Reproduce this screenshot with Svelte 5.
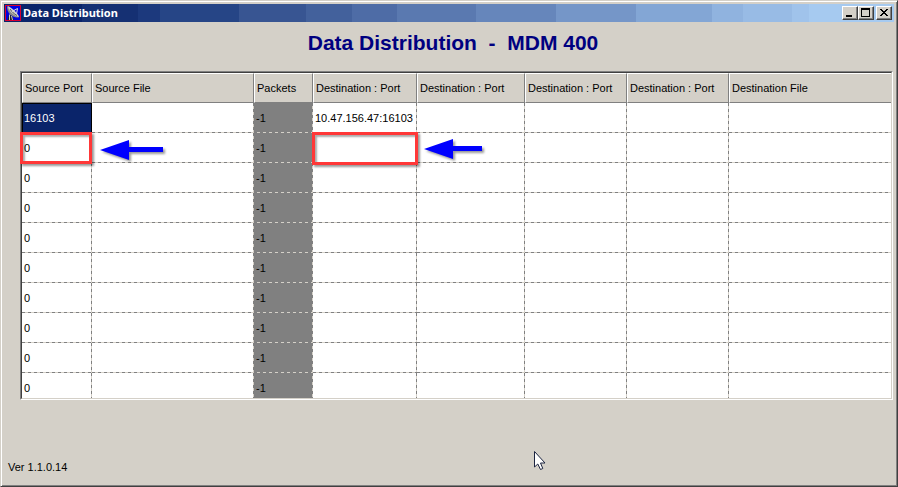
<script>
  const columns = [
    { label: 'Source Port', width: 70 },
    { label: 'Source File', width: 162 },
    { label: 'Packets', width: 59 },
    { label: 'Destination : Port', width: 104 },
    { label: 'Destination : Port', width: 108 },
    { label: 'Destination : Port', width: 102 },
    { label: 'Destination : Port', width: 102 },
    { label: 'Destination File' }
  ];
  const rows = Array.from({ length: 10 }, (_, i) =>
    i === 0
      ? ['16103', '', '-1', '10.47.156.47:16103', '', '', '', '']
      : ['0', '', '-1', '', '', '', '', '']
  );
</script>

{#snippet arrow(length)}
  <svg class="arrow" width={length} height="20" viewBox="0 0 {length} 20" aria-hidden="true">
    <path d="M0 10 29 0V7H{length}V12H29V20Z" fill="#0000ff" />
  </svg>
{/snippet}

<div class="window">
  <header class="titlebar">
    <svg class="app-icon" width="16" height="16" viewBox="0 0 16 16" aria-hidden="true">
      <rect width="16" height="16" fill="#0000e0" />
      <path d="M4 9.5 2.5 15.5H9L7 11Z" fill="#222" />
      <path d="M4.5 9.5V15M6.5 11 7.5 15" fill="none" stroke="#c8c8c8" />
      <path d="M2 1.5C2 7.5 6.500 13 13.500 12.500L14 11.500 3.500 1Z" fill="#8a8a8a" />
      <path d="M3 1.500C7 2.500 12.500 8 14 11.800C9.500 11.500 3.500 6 3 1.500Z" fill="#d0d0d0" />
      <path d="M5 4C7 7 9 9 12 10.500" fill="none" stroke="#555" />
      <path d="M7 6.500 12.500 3.500M11.500 9 12.500 3.500" fill="none" stroke="#ddd" />
      <rect x=".5" y=".5" width="15" height="15" fill="none" stroke="#d80030" />
    </svg>
    <span class="caption">Data Distribution</span>
    <div class="controls">
      <button type="button" aria-label="Minimize">
        <svg width="12" height="10" viewBox="0 0 12 10" shape-rendering="crispEdges"><path d="M2 7H8V9H2Z" /></svg>
      </button>
      <button type="button" aria-label="Maximize">
        <svg width="12" height="10" viewBox="0 0 12 10" shape-rendering="crispEdges"><path fill-rule="evenodd" d="M1 0H10V9H1ZM2 2V8H9V2Z" /></svg>
      </button>
      <button type="button" class="close" aria-label="Close">
        <svg width="12" height="10" viewBox="0 0 12 10" shape-rendering="crispEdges"><path d="M2 1H4V2H5V3H7V2H8V1H10V2H9V3H8V4H7V5H8V6H9V7H10V8H8V7H7V6H5V7H4V8H2V7H3V6H4V5H5V4H4V3H3V2H2Z" /></svg>
      </button>
    </div>
  </header>

  <main>
    <h1>Data Distribution&nbsp; - &nbsp;MDM 400</h1>
    <div class="grid">
      <div class="well">
        <table>
          <colgroup>
            {#each columns as c}
              <col style:width={c.width ? `${c.width}px` : null} />
            {/each}
          </colgroup>
          <thead>
            <tr>
              {#each columns as c}
                <th scope="col">{c.label}</th>
              {/each}
            </tr>
          </thead>
          <tbody>
            {#each rows as row, r}
              <tr>
                {#each row as value, c}
                  <td class:selected={r === 0 && c === 0} class:packets={c === 2}>
                    {value}
                    {#if r === 1 && (c === 0 || c === 3)}
                      <div class="callout" class:wide={c === 3}>{@render arrow(c === 3 ? 58 : 63)}</div>
                    {/if}
                  </td>
                {/each}
              </tr>
            {/each}
          </tbody>
        </table>
      </div>
    </div>
    <footer>Ver 1.1.0.14</footer>
  </main>

  <svg class="cursor" width="14" height="21" viewBox="0 0 14 21" aria-hidden="true">
    <path d="M1.500 1.500V17L4.800 14 7.500 19.500 9.800 18.500 7.500 13H12Z" fill="#fff" stroke="#1c2440" />
  </svg>
</div>

<style>
  .window {
    box-sizing: border-box;
    position: relative;
    display: flex;
    flex-direction: column;
    min-height: 100vh;
    padding: 2px;
    background: #d4d0c8;
    border: 1px solid;
    border-color: #d4d0c8 #404040 #404040 #d4d0c8;
    box-shadow: inset 1px 1px #fff, inset -1px -1px #808080;
    color: #000;
    font: 11px/14px "Liberation Sans", Arial, sans-serif;
  }
  .titlebar {
    display: flex;
    align-items: center;
    height: 18px;
    margin: 1px 1px 0;
    padding: 0 2px 0 1px;
    background: linear-gradient(90deg,
      #0a246a 0 8.8%, #153073 8.8% 15.1%, #1c397d 15.1% 17.5%, #264586 17.5% 26.4%,
      #385592 26.4% 33.9%, #43619c 33.9% 39.1%, #4e6ca6 39.1% 44.2%, #5a79b0 44.2% 53%,
      #6686bb 53% 62%, #7596c8 62% 71%, #83a6d5 71% 79.5%, #90b3df 79.5% 83%,
      #98bbe5 83% 88.5%, #a0c3eb 88.5% 90.5%, #a6caf0 90.5%);
  }
  .app-icon { flex: none; }
  .caption {
    padding-left: 2px;
    color: #fff;
    font: bold 11px/16px "Noto Sans", Tahoma, sans-serif;
  }
  .controls { display: flex; margin-left: auto; }
  button {
    display: flex;
    align-items: center;
    justify-content: center;
    width: 16px;
    height: 14px;
    padding: 0;
    border: 1px solid;
    border-color: #fff #404040 #404040 #fff;
    background: #d4d0c8;
    box-shadow: inset -1px -1px #808080;
  }
  button svg { flex: none; }
  .close { margin-left: 2px; }
  main {
    display: flex;
    flex: 1;
    flex-direction: column;
  }
  h1 {
    margin: 9px 0 16px;
    padding-left: 8px;
    color: #000080;
    font: bold 21px/24px "Liberation Sans", Arial, sans-serif;
    text-align: center;
  }
  .grid {
    margin: 0 2px 0 17px;
    border: 1px solid;
    border-color: #808080 #fff #fff #808080;
  }
  .well {
    height: 325px;
    border: 1px solid;
    border-color: #404040 #d4d0c8 #d4d0c8 #404040;
    background: #fff;
    overflow-x: visible;
    overflow-y: clip;
  }
  table {
    width: 100%;
    border-collapse: separate;
    border-spacing: 0;
    table-layout: fixed;
  }
  th {
    box-sizing: border-box;
    height: 30px;
    padding: 0 0 0 2px;
    border: 1px solid;
    border-color: #fff #808080 #808080 #fff;
    background: #d4d0c8;
    font-weight: normal;
    text-align: left;
    white-space: nowrap;
  }
  th:last-child { border-right: 0; }
  td {
    position: relative;
    box-sizing: border-box;
    height: 30px;
    padding: 0 0 1px 2px;
    background:
      repeating-linear-gradient(90deg, #808080 0 3px, #d4d0c8 3px 6px) 0 100% / 100% 1px no-repeat,
      repeating-linear-gradient(#808080 0 3px, #d4d0c8 3px 6px) 100% 0 / 1px 100% no-repeat,
      #fff;
    white-space: nowrap;
  }
  td:last-child {
    background: repeating-linear-gradient(90deg, #808080 0 3px, #d4d0c8 3px 6px) 0 100% / 100% 1px no-repeat;
  }
  td.packets { background-color: #808080; }
  td.selected {
    background: #0a246a;
    box-shadow: inset 0 0 0 1px #000;
    color: #fff;
  }
  .callout {
    position: absolute;
    z-index: 1;
    inset: -1px 0 -1px -2px;
    border: 3px solid #ff3838;
    box-shadow: 2px 2px 2px #0006, inset 2px 2px 2px #0005;
  }
  .arrow {
    position: absolute;
    top: 5px;
    left: calc(100% + 11px);
    overflow: visible;
    filter: drop-shadow(2px 2px 1px #0006);
  }
  .wide { inset: -1px -1px -2px; }
  .wide .arrow { top: 4px; left: calc(100% + 9px); }
  footer { margin: auto 0 10px 5px; }
  .cursor {
    position: absolute;
    top: 449px;
    left: 532px;
  }
</style>
